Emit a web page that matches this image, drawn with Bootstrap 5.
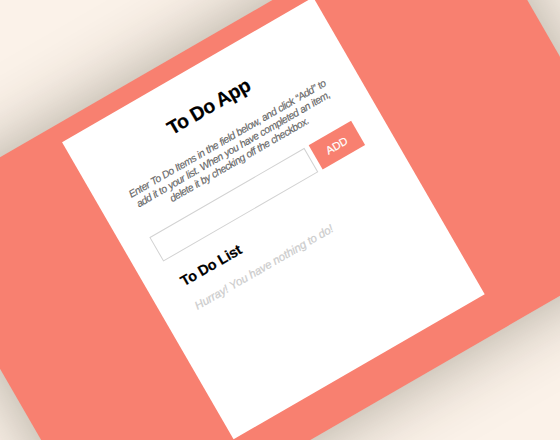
<!DOCTYPE html>
<html lang="en">
<head>
<meta charset="utf-8">
<meta name="viewport" content="width=device-width, initial-scale=1">
<title>To Do App</title>
<link href="https://cdn.jsdelivr.net/npm/bootstrap@5.3.0/dist/css/bootstrap.min.css" rel="stylesheet">
<style>
html, body { height: 100%; overflow: hidden; }
body { background: #fbf2e9; font-family: "Liberation Sans", Arial, sans-serif; color: #000; }
.stage { width: 641px; height: 400px; padding: 18.2px 0 0 167px; background: #f88070;
  box-shadow: 0 0 72px rgba(50, 45, 25, .38); transform: translate(5.5px, 3.1px) rotate(-30deg); }
.sheet { width: 289.5px; height: 342.5px; padding: 30.7px 28px 0; }
.app-title { font-size: 19.5px; line-height: 22px; letter-spacing: -.45px; margin-bottom: 20.8px; -webkit-text-stroke: .2px #000; }
.intro { font-size: 10.3px; line-height: 12.2px; letter-spacing: -.46px; word-spacing: .4px; color: #666; margin: 0 -8px 15.7px; white-space: nowrap; -webkit-text-stroke: .15px #666; }
.add-form { height: 28px; gap: 4.5px; margin: 0 0 19.1px; }
.task-input { width: 179px; border: 1px solid #d2d2d2; padding: 0 8px; font-size: 11px; }
.add-btn { width: 49.5px; background: #f88070; color: #fff; font-size: 11px; line-height: 14px; -webkit-text-stroke: .2px #fff; }
.list-title { font-size: 14.5px; line-height: 16px; letter-spacing: -.2px; margin: 0 0 13.2px 5.5px; -webkit-text-stroke: .2px #000; }
.empty-note { font-size: 11.5px; line-height: 14px; letter-spacing: -.12px; color: #ccc; margin: 0 0 0 5.5px; -webkit-text-stroke: .2px #ccc; }
</style>
</head>
<body class="d-flex align-items-center justify-content-center">
<main class="stage flex-shrink-0">
  <section class="sheet bg-white">
    <h1 class="app-title fw-bold text-center">To Do App</h1>
    <p class="intro fst-italic text-center">Enter To Do Items in the field below, and click “Add” to<br>add it to your list. When you have completed an item,<br>delete it by checking off the checkbox.</p>
    <form class="add-form d-flex">
      <input class="task-input bg-white rounded-0" type="text" aria-label="New item">
      <button class="add-btn btn border-0 rounded-0 p-0 flex-shrink-0" type="button">ADD</button>
    </form>
    <h2 class="list-title fw-bold">To Do List</h2>
    <p class="empty-note fst-italic">Hurray! You have nothing to do!</p>
  </section>
</main>
<script src="https://cdn.jsdelivr.net/npm/bootstrap@5.3.0/dist/js/bootstrap.bundle.min.js"></script>
</body>
</html>
